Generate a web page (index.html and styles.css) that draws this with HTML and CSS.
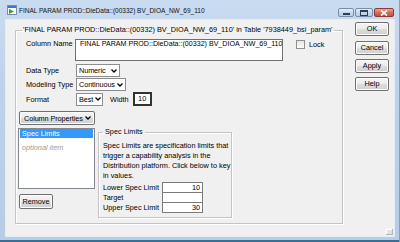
FILE: index.html
```html
<!DOCTYPE html>
<html lang="en">
<head>
    <meta charset="UTF-8">
    <title>Column Info</title>
    <link rel="stylesheet" href="styles.css">
</head>
<body>
<div class="window">
    <div class="titlebar">
        <svg class="app-icon" width="10" height="10" viewBox="0 0 10 10">
            <rect x="0.5" y="0.5" width="9" height="9" fill="#fff" stroke="#7b8ea6"/>
            <rect x="1" y="1" width="8" height="2" fill="#3f77c0"/>
            <path d="M2 4 L7 6.5 L2 9 Z" fill="#2fa33a"/>
        </svg>
        <span class="title">FINAL PARAM PROD::DieData::(00332) BV_DIOA_NW_69_110</span>
        <div class="caption">
            <span class="cap cap-min"><svg width="7" height="3"><rect x="0" y="0" width="7" height="2" fill="#2d3f55"/></svg></span>
            <span class="cap cap-max"><svg width="8" height="6"><rect x="0.5" y="0.5" width="7" height="5" fill="none" stroke="#2d3f55"/><rect x="1" y="1" width="6" height="1" fill="#2d3f55"/></svg></span>
            <span class="cap cap-close"><svg width="8" height="6"><path d="M1 0.5 L7 5.5 M7 0.5 L1 5.5" stroke="#fff" stroke-width="1.6"/></svg></span>
        </div>
    </div>

    <div class="client">
        <fieldset class="group main-group">
            <legend>'FINAL PARAM PROD::DieData::(00332) BV_DIOA_NW_69_110' in Table '7938449_bsi_param'</legend>

            <div class="row name-row">
                <span class="lbl">Column Name</span>
                <div class="textbox">FINAL PARAM PROD::DieData::(00332) BV_DIOA_NW_69_110</div>
                <span class="checkbox"></span>
                <span class="check-label">Lock</span>
            </div>

            <div class="row field-row first">
                <span class="lbl">Data Type</span>
                <div class="combo combo-numeric">Numeric<svg class="chev" width="6" height="4"><path d="M0.5 0.5 L3 3 L5.5 0.5" fill="none" stroke="#000" stroke-width="1.3"/></svg></div>
            </div>
            <div class="row field-row">
                <span class="lbl">Modeling Type</span>
                <div class="combo combo-cont">Continuous<svg class="chev" width="6" height="4"><path d="M0.5 0.5 L3 3 L5.5 0.5" fill="none" stroke="#000" stroke-width="1.3"/></svg></div>
            </div>
            <div class="row field-row">
                <span class="lbl">Format</span>
                <div class="combo combo-best">Best<svg class="chev" width="6" height="4"><path d="M0.5 0.5 L3 3 L5.5 0.5" fill="none" stroke="#000" stroke-width="1.3"/></svg></div>
                <span class="width-lbl">Width</span>
                <div class="width-box">10</div>
            </div>

            <div class="btn menu-btn">Column Properties<svg class="chev" width="6" height="4"><path d="M0.5 0.5 L3 3 L5.5 0.5" fill="none" stroke="#000" stroke-width="1.3"/></svg></div>

            <div class="props">
                <div class="props-left">
                    <div class="listbox">
                        <div class="item selected">Spec Limits</div>
                        <div class="item optional">optional item</div>
                    </div>
                    <div class="btn remove-btn">Remove</div>
                </div>

                <fieldset class="group spec-group">
                    <legend>Spec Limits</legend>
                    <p class="spec-text">Spec Limits are specification limits that<br>trigger a capability analysis in the<br>Distribution platform. Click below to key<br>in values.</p>
                    <div class="spec-table">
                        <div class="spec-row"><span class="spec-lbl">Lower Spec Limit</span><span class="spec-val">10</span></div>
                        <div class="spec-row"><span class="spec-lbl">Target</span><span class="spec-val"></span></div>
                        <div class="spec-row"><span class="spec-lbl">Upper Spec Limit</span><span class="spec-val">30</span></div>
                    </div>
                </fieldset>
            </div>
        </fieldset>

        <div class="side-buttons">
            <div class="btn side-btn">OK</div>
            <div class="btn side-btn">Cancel</div>
            <div class="btn side-btn">Apply</div>
            <div class="btn side-btn">Help</div>
        </div>

        <span class="grip"></span>
    </div>
</div>
</body>
</html>
```

FILE: styles.css
```css
body {
    margin: 0;
    padding: 0;
    font-family: 'Liberation Sans', Arial, sans-serif;
    font-size: 7.3px;
    color: #000;
    background: #fff;
}

.window {
    width: 400px;
    height: 242px;
    display: flex;
    flex-direction: column;
    background: linear-gradient(180deg, #c9dbf0 0%, #bdd1ea 40%, #b7cce6 100%);
    box-shadow: inset -1px 0 0 #6fa7cf, inset 0 -2px 0 #3a6f92;
    overflow: hidden;
}

.titlebar {
    height: 20px;
    display: flex;
    align-items: center;
}

.app-icon {
    margin-left: 7px;
    flex: none;
}

.title {
    margin-left: 2px;
    font-size: 6.5px;
    white-space: nowrap;
    color: #111;
}

.caption {
    margin-left: auto;
    margin-right: 6px;
    align-self: flex-start;
    margin-top: 8px;
    display: flex;
    gap: 1px;
}

.cap {
    height: 9px;
    display: flex;
    align-items: center;
    justify-content: center;
    border: 1px solid #7a8da6;
    border-radius: 2px;
    box-sizing: border-box;
    background: linear-gradient(180deg, #e6eef8 0%, #c9d7ea 50%, #b9cbe2 100%);
}

.cap svg {
    display: block;
}

.cap-min {
    width: 16px;
}

.cap-min svg {
    margin-top: 3px;
}

.cap-max {
    width: 18px;
}

.cap-close {
    width: 20px;
    border-color: #8c3b33;
    background: linear-gradient(180deg, #e8a79b 0%, #d0705f 50%, #c2503d 100%);
}

.client {
    position: relative;
    flex: 1;
    margin: 0 6px 6px 6px;
    background: #f0f0f0;
    display: flex;
    align-items: flex-start;
    box-shadow: 0 0 0 1px #e4ecf6;
}

.group {
    margin: 0;
    border: 1px solid #c4c4c4;
    box-shadow: 1px 1px 0 #fff, inset 1px 1px 0 #fff;
    box-sizing: border-box;
    min-width: 0;
}

.group legend {
    line-height: 10px;
    white-space: nowrap;
}

.main-group {
    margin: 5px 0 0 9px;
    width: 328px;
    height: 199px;
    padding: 4px 3px 0 3px;
}

.main-group > legend {
    margin-left: 3px;
    padding: 0 1px;
}

.row {
    display: flex;
    align-items: flex-start;
    padding-left: 7px;
}

.lbl {
    width: 49px;
    line-height: 9px;
    white-space: nowrap;
}

.textbox {
    width: 208px;
    height: 22px;
    box-sizing: border-box;
    background: #fff;
    border: 1px solid #707070;
    padding: 0 4px;
    line-height: 9px;
    font-size: 7.1px;
    white-space: nowrap;
    overflow: hidden;
}

.checkbox {
    width: 9px;
    height: 9px;
    box-sizing: border-box;
    margin: 1px 0 0 13px;
    border: 1px solid #8e8f8f;
    background: linear-gradient(180deg, #e6e6e6, #fbfbfb);
}

.check-label {
    margin-left: 4px;
    line-height: 11px;
}

.field-row {
    margin-top: 1px;
    align-items: center;
}

.field-row.first {
    margin-top: 3px;
}

.field-row .lbl {
    width: 50px;
}

.combo {
    height: 13px;
    box-sizing: border-box;
    border: 1px solid #8d8d8d;
    background: #fff;
    display: flex;
    align-items: center;
    justify-content: space-between;
    padding: 0 2px 0 2px;
    white-space: nowrap;
    letter-spacing: -0.1px;
}

.combo-numeric {
    width: 44px;
}

.combo-cont {
    width: 50px;
}

.combo-best {
    width: 27px;
}

.chev {
    flex: none;
    display: block;
    margin-left: 2px;
}

.width-lbl {
    margin-left: 7px;
}

.width-box {
    margin-left: 4px;
    width: 19px;
    height: 14px;
    box-sizing: border-box;
    border: 2px solid #333;
    background: #fff;
    text-align: center;
    line-height: 10px;
}

.btn {
    box-sizing: border-box;
    border: 1px solid #707070;
    border-radius: 2px;
    background: linear-gradient(180deg, #f6f6f6 0%, #ebebeb 50%, #dddddd 51%, #cfcfcf 100%);
    box-shadow: inset 0 0 0 1px #fcfcfc;
    white-space: nowrap;
    text-align: center;
}

.menu-btn {
    margin-top: 5px;
    width: 76px;
    height: 14px;
    display: flex;
    align-items: center;
    justify-content: space-between;
    padding: 0 3px 0 4px;
    letter-spacing: -0.1px;
}

.props {
    display: flex;
    align-items: flex-start;
    margin-top: 2px;
}

.props-left {
    width: 77px;
    margin-left: -1px;
    margin-top: 1px;
}

.listbox {
    height: 61px;
    box-sizing: border-box;
    border: 1px solid #828790;
    background: #fff;
    padding: 0 1px;
}

.item {
    height: 9px;
    line-height: 9px;
    padding-left: 2px;
    margin-bottom: 1px;
}

.item.selected {
    background: #3399ff;
    color: #fff;
}

.item.optional {
    color: #9a9a9a;
    font-style: italic;
    margin-top: 5px;
}

.remove-btn {
    margin: 5px 0 0 1px;
    width: 34px;
    height: 15px;
    line-height: 13px;
}

.spec-group {
    margin-left: 3px;
    width: 134px;
    height: 91px;
    padding: 0 2px 0 4px;
}

.spec-group > legend {
    padding: 0 2px;
}

.spec-text {
    margin: 4px 0 0 0;
    line-height: 10px;
    white-space: nowrap;
}

.spec-table {
    margin-top: 1px;
}

.spec-row {
    display: flex;
    align-items: center;
    height: 10px;
}

.spec-lbl {
    width: 59px;
}

.spec-val {
    width: 41px;
    height: 11px;
    box-sizing: border-box;
    border: 1px solid #7a7a7a;
    background: #fff;
    text-align: right;
    padding-right: 2px;
    line-height: 9px;
}

.side-buttons {
    margin: 2px 0 0 12px;
    display: flex;
    flex-direction: column;
    gap: 4px;
}

.side-btn {
    width: 34px;
    height: 14px;
    line-height: 12px;
}

.side-btn:first-child {
    margin-bottom: 1px;
}

.grip {
    position: absolute;
    right: 1px;
    bottom: 1px;
    width: 7px;
    height: 6px;
    background: #e2e2e2;
    box-shadow: inset -1px -1px 0 #b5b5b5, inset 1px 1px 0 #fff;
}
```
